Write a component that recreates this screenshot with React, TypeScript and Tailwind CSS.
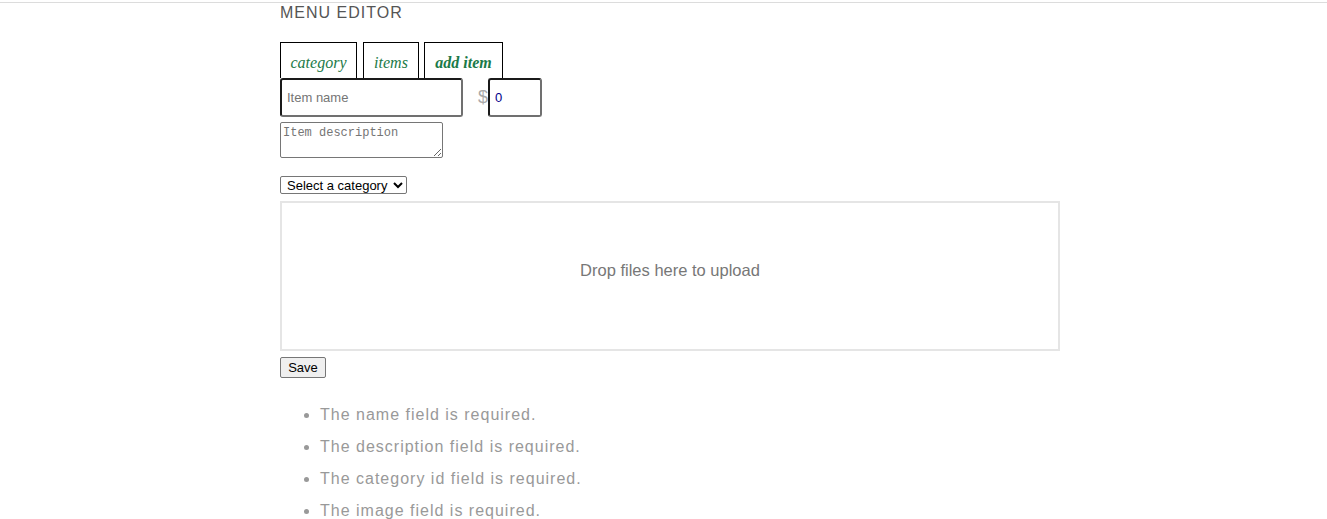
const tabs = [
  { name: 'category', bold: false, w: 'w-[77px]' },
  { name: 'items', bold: false, w: 'w-[56px]' },
  { name: 'add item', bold: true, w: 'w-[79px]' },
];

const errors = [
  'The name field is required.',
  'The description field is required.',
  'The category id field is required.',
  'The image field is required.',
];

export default function App() {
  return (
    <div className="min-h-[519px] bg-white font-['Liberation_Sans',Arial,sans-serif]">
      <div className="h-[2px] border-t border-[#dcdcdc] mt-[2px]"></div>
      <div className="ml-[280px] w-[780px]">
        <h1 className="text-[16px] leading-[20px] tracking-[1px] text-[#555] h-[20px] -mt-[1px]">MENU EDITOR</h1>

        <div className="flex mt-[19px] h-[36px]">
          {tabs.map((t, i) => (
            <div
              key={t.name}
              className={`${t.w} ${i > 0 ? (i === 1 ? 'ml-[6px]' : 'ml-[5px]') : ''} h-[36px] border-t border-l border-r border-black flex items-center justify-center pt-[4px] font-['Liberation_Serif',serif] italic text-[16px] text-[#1b7a48] ${t.bold ? 'font-bold' : ''}`}
            >
              {t.name}
            </div>
          ))}
        </div>

        <div className="flex items-center h-[39px]">
          <input
            placeholder="Item name"
            className="w-[183px] h-[39px] border-2 border-t-[#1a1a1a] border-l-[#1a1a1a] border-b-[#707070] border-r-[#707070] rounded-[3px] px-[5px] text-[13px] placeholder:text-[#757575] outline-none"
          />
          <span className="ml-[15px] text-[18px] text-[#aaa] w-[10px]">$</span>
          <input
            defaultValue="0"
            className="w-[54px] h-[39px] border-2 border-t-[#1a1a1a] border-l-[#1a1a1a] border-b-[#707070] border-r-[#707070] rounded-[3px] px-[5px] text-[13px] text-[#00008b] outline-none"
          />
        </div>

        <textarea
          placeholder="Item description"
          className="block mt-[5px] w-[163px] h-[36px] border border-[#767676] rounded-[2px] px-[2px] pt-[3px] font-['Liberation_Mono','DejaVu_Sans_Mono',monospace] text-[12px] leading-[15px] placeholder:text-[#757575] outline-none"
        />

        <select className="block mt-[18px] w-[127px] h-[18px] border border-[#767676] rounded-[2px] text-[13px] leading-[16px] text-black pl-[2px] bg-white appearance-auto">
          <option>Select a category</option>
        </select>

        <div className="mt-[7px] w-[780px] h-[150px] border-2 border-[#e5e5e5] flex items-center justify-center">
          <span className="text-[16.5px] text-[#777] -mt-[12px]">Drop files here to upload</span>
        </div>

        <button className="block mt-[6px] w-[46px] h-[21px] bg-[#efefef] border border-[#767676] rounded-[2px] text-[13px] text-black leading-[19px]">
          Save
        </button>

        <ul className="list-disc pl-[40px] mt-[21px] text-[16px] text-[#999] tracking-[1px] marker:text-[#999]">
          {errors.map((e) => (
            <li key={e} className="leading-[32px]">{e}</li>
          ))}
        </ul>
      </div>
    </div>
  );
}
